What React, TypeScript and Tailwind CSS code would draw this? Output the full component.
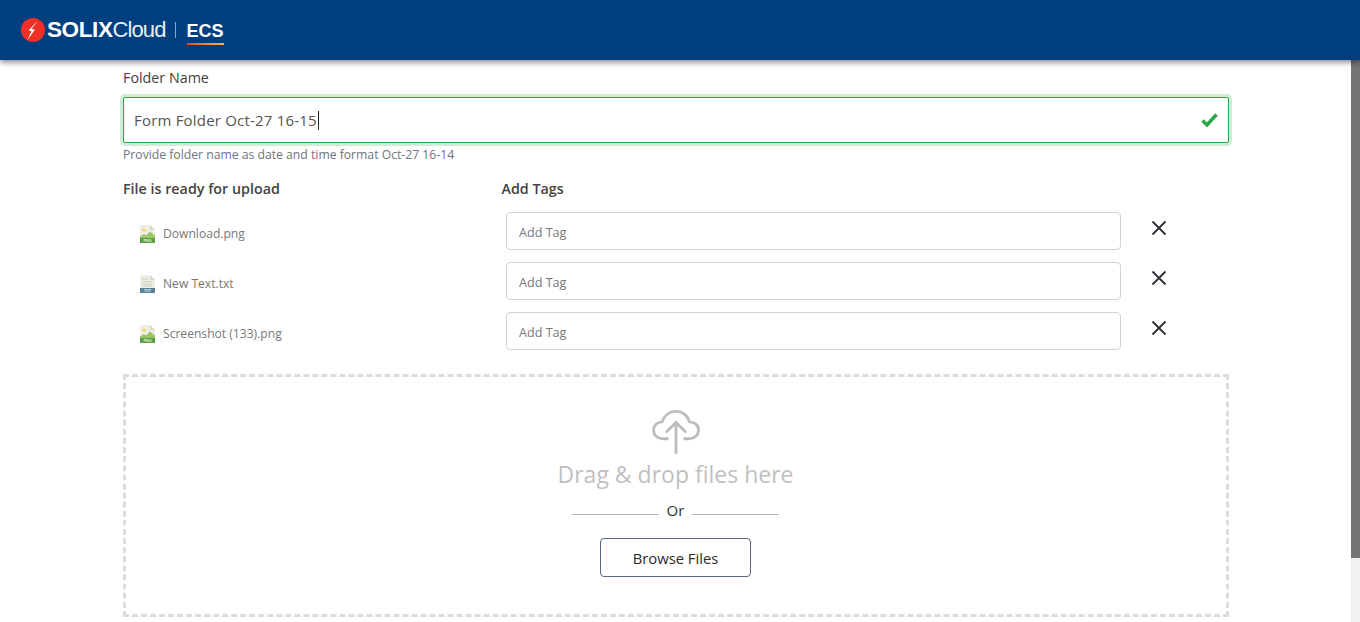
import React from "react";

const font = { fontFamily: '"Open Sans", "Noto Sans", sans-serif' };
const logoFont = { fontFamily: '"Liberation Sans", sans-serif' };

function PngIcon() {
  return (
    <svg width="15" height="18" viewBox="0 0 15 18" className="shrink-0">
      <path d="M0 0H10L15 5V18H0Z" fill="#efeee3" />
      <path d="M10 0L15 5H10Z" fill="#d9d8cb" />
      <circle cx="4" cy="5" r="1.5" fill="#f4cf47" />
      <path d="M0 11.5L4 9L6 10.5L10 6.5L15 10.5V13H0Z" fill="#9cc56a" />
      <rect y="13" width="15" height="5" fill="#5b9e45" />
      <text x="7.5" y="17" textAnchor="middle" fontSize="3.8" fontWeight="700" fill="#e6f2de" fontFamily="Liberation Sans, sans-serif">PNG</text>
    </svg>
  );
}

function TxtIcon() {
  return (
    <svg width="15" height="18" viewBox="0 0 15 18" className="shrink-0">
      <path d="M0 0H10L15 5V18H0Z" fill="#efeee3" />
      <path d="M10 0L15 5H10Z" fill="#d9d8cb" />
      <path d="M2 4H8M2 6.5H12M2 9H12M2 11H12" stroke="#cfcec2" strokeWidth="1" />
      <rect y="13" width="15" height="5" fill="#58829a" />
      <text x="7.5" y="17" textAnchor="middle" fontSize="3.8" fontWeight="700" fill="#e6eff4" fontFamily="Liberation Sans, sans-serif">TXT</text>
    </svg>
  );
}

function CloseIcon() {
  return (
    <svg width="16" height="16" viewBox="0 0 16 16" fill="none" stroke="#2b2f36" strokeWidth="1.8">
      <path d="M1.5 1.5L14.5 14.5M14.5 1.5L1.5 14.5" />
    </svg>
  );
}

function Row({ name, icon }: { name: string; icon: React.ReactNode }) {
  return (
    <div className="flex h-[38px] items-center">
      <div className="flex w-[383px] items-center gap-[8px] pl-[17px] pt-[5px]">
        {icon}
        <span className="text-[12.1px] leading-[18px] text-[#777]">{name}</span>
      </div>
      <div className="flex h-[38px] w-[615px] items-center rounded-[4px] border border-[#ced4da] px-[12px] pt-[4px] text-[12.6px] text-[#777]">
        Add Tag
      </div>
      <div className="ml-[30px] -mt-[6px]">
        <CloseIcon />
      </div>
    </div>
  );
}

export default function App() {
  return (
    <div className="flex h-[622px] w-[1360px] flex-col overflow-hidden bg-white" style={font}>
      <header className="relative z-10 flex h-[60px] shrink-0 items-center bg-[#003f7f] pl-[21px] shadow-[0_2px_6px_rgba(0,0,0,0.5)]">
        <svg width="24" height="24" viewBox="0 0 24 24" className="shrink-0">
          <circle cx="12" cy="12" r="12" fill="#ee3124" />
          <path d="M17 2.5L10.5 11L14 11.5L6.5 22L10.5 13L7.5 12.5Z" fill="#fff" />
        </svg>
        <span className="ml-[2px] text-[22.5px] font-bold leading-none tracking-[-0.4px] text-white" style={logoFont}>
          SOLIX
        </span>
        <span className="text-[22px] leading-none tracking-[-0.9px] text-[#e8eef5]" style={logoFont}>
          Cloud
        </span>
        <div className="ml-[9px] h-[16px] w-px bg-[#8fa8c5]" />
        <div className="ml-[11px] flex flex-col items-stretch pt-[6px]">
          <span className="text-[18px] font-bold leading-[20px] text-white" style={logoFont}>
            ECS
          </span>
          <div className="mt-[2px] h-[2px] bg-gradient-to-r from-[#e8432e] to-[#f6b73c]" />
        </div>
      </header>

      <div className="flex min-h-0 flex-1">
        <main className="min-w-0 flex-1 pl-[123px] pr-[122px]">
          <div className="pt-[8px] text-[14.3px] leading-[20px] text-[#3f3f3f]">Folder Name</div>
          <div className="mt-[9px] flex h-[46px] items-center justify-between rounded-[2px] border border-[#28a745] pl-[10px] pr-[10px] shadow-[0_0_0_3px_rgba(40,167,69,0.22)]">
            <div className="flex items-center pt-[1px] text-[15px] tracking-[0.2px] text-[#555]">
              Form Folder Oct-27 16-15
              <span className="ml-px inline-block h-[19px] w-px bg-[#222]" />
            </div>
            <svg width="17" height="14" viewBox="0 0 17 14" fill="none" stroke="#28a745" strokeWidth="3.4">
              <path d="M1.5 7.5L6 12L15.5 1.5" />
            </svg>
          </div>
          <div className="mt-[3px] text-[12.2px] leading-[18px] text-[#6c757d]">
            Provide folder name as date and time format Oct-27 16-14
          </div>

          <div className="mt-[15px] flex text-[14.3px] font-semibold leading-[20px] text-[#444]">
            <div className="w-[378.5px]">File is ready for upload</div>
            <div>Add Tags</div>
          </div>

          <div className="mt-[13px] flex flex-col gap-[12px]">
            <Row name="Download.png" icon={<PngIcon />} />
            <Row name="New Text.txt" icon={<TxtIcon />} />
            <Row name="Screenshot (133).png" icon={<PngIcon />} />
          </div>

          <section className="mt-[24px] flex h-[243px] flex-col items-center border-[3px] border-dashed border-[#dddddd] pr-[1px] pt-[32px]">
            <svg width="48" height="46" viewBox="0 0 50 46" fill="none" stroke="#bdbdbd" strokeWidth="3" strokeLinecap="round" strokeLinejoin="round">
              <path d="M16 30H11C5.5 30 1.5 26 1.5 21C1.5 16 5.5 12.5 10.5 12.5C12.5 6 18 1.5 25 1.5C32 1.5 37.5 6 39 12.5C44.5 12.5 48.5 16 48.5 21C48.5 26 44.5 30 39 30H34" />
              <path d="M25 44.5V13M15.5 22.5L25 13L34.5 22.5" />
            </svg>
            <div className="mt-[2px] text-[23px] leading-[34px] text-[#bfbfbf]">Drag &amp; drop files here</div>
            <div className="mt-[9px] flex items-center gap-[8px]">
              <div className="mt-[8px] h-px w-[87px] bg-[#b5b5b5]" />
              <span className="text-[15px] leading-[20px] text-[#333]">Or</span>
              <div className="mt-[8px] h-px w-[87px] bg-[#b5b5b5]" />
            </div>
            <div className="mt-[18px] flex h-[39px] w-[151px] items-center justify-center rounded-[4px] border border-[#5a6679] pt-[1px] text-[14.8px] text-[#2b2b2b]">
              Browse Files
            </div>
          </section>
        </main>
        <aside className="flex w-[9px] shrink-0 flex-col bg-[#f1f1f1]">
          <div className="h-[498px] bg-[#757575]" />
        </aside>
      </div>
    </div>
  );
}
